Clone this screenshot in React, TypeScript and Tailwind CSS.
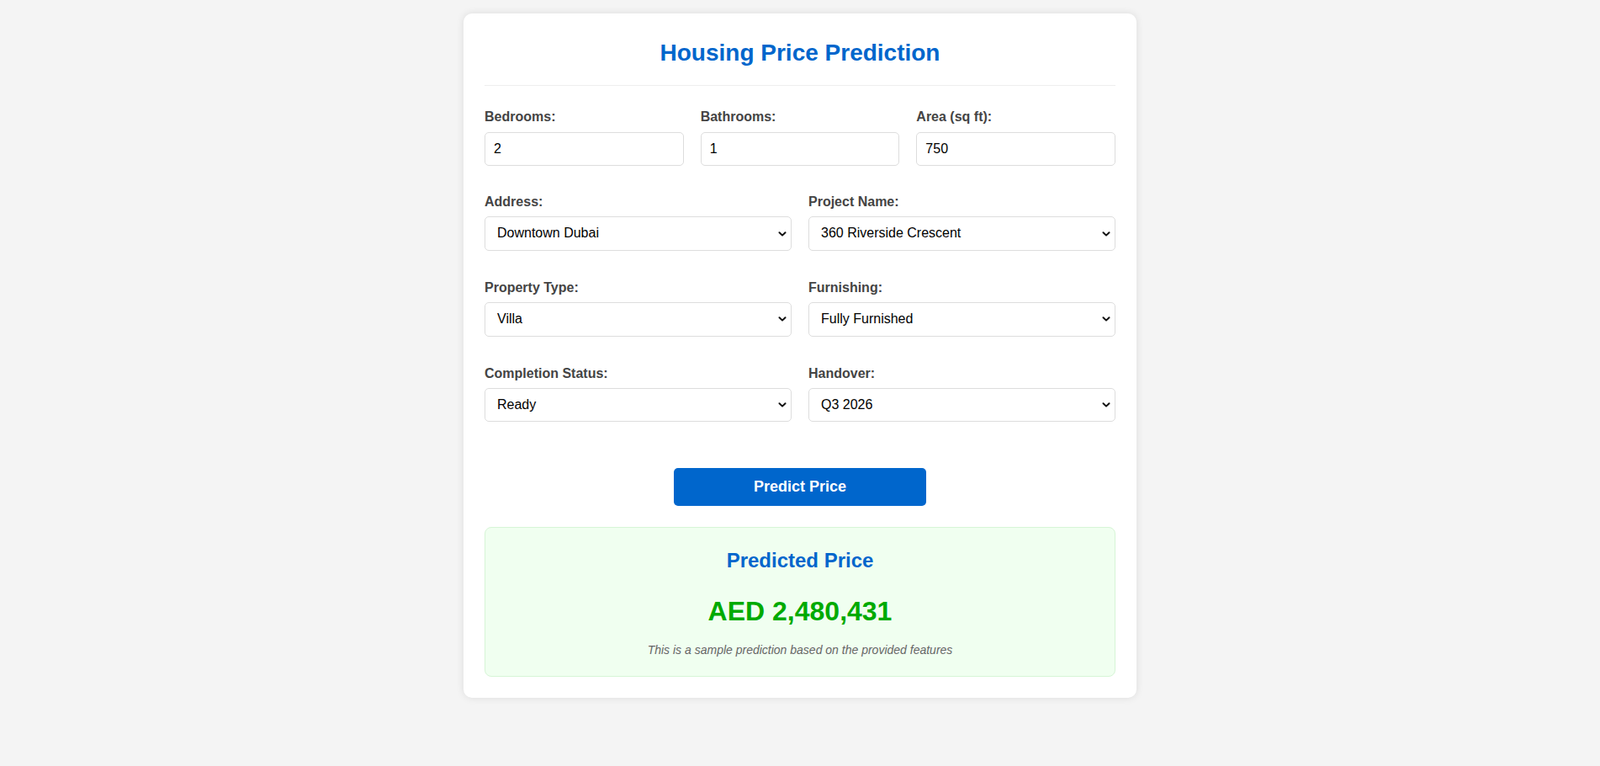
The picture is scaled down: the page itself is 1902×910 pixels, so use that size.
import React, { useState } from 'react';

const addresses = ['Downtown Dubai', 'Dubai Marina', 'Business Bay', 'Jumeirah Village Circle', 'Palm Jumeirah'];
const projects = ['360 Riverside Crescent', 'Burj Royale', 'Marina Gate', 'Sobha Hartland'];
const propertyTypes = ['Villa', 'Apartment', 'Townhouse', 'Penthouse'];
const furnishings = ['Fully Furnished', 'Semi Furnished', 'Unfurnished'];
const statuses = ['Ready', 'Off-Plan'];
const handovers = ['Q3 2026', 'Q4 2026', 'Q1 2027', 'Q2 2027'];

// ===== 公共组件 =====
function Label({ text }: { text: string }) {
  return <label className="block mb-2 text-[16px] leading-[1.15] font-bold text-[#444]">{text}</label>;
}

function NumberField({ label, value, onChange }: { label: string; value: string; onChange: (v: string) => void }) {
  return (
    <div>
      <Label text={label} />
      <input
        type="text"
        value={value}
        onChange={(e: React.ChangeEvent<HTMLInputElement>) => onChange(e.target.value)}
        className="block w-full px-[10px] py-[10px] text-[16px] leading-[1.15] text-black bg-white border border-[#ddd] rounded-[5px] focus:outline-none"
      />
    </div>
  );
}

function SelectField({ label, value, options, onChange }: { label: string; value: string; options: string[]; onChange: (v: string) => void }) {
  return (
    <div>
      <Label text={label} />
      <div className="relative">
        <select
          value={value}
          onChange={(e: React.ChangeEvent<HTMLSelectElement>) => onChange(e.target.value)}
          className="block w-full appearance-none pl-[14px] pr-8 py-[10px] text-[16px] leading-[1.15] text-black bg-white border border-[#ddd] rounded-[5px] focus:outline-none"
        >
          {options.map((o) => <option key={o}>{o}</option>)}
        </select>
        <svg className="absolute right-[6px] top-1/2 -translate-y-1/2 pointer-events-none" width="10" height="6" viewBox="0 0 10 6" fill="none" stroke="#111" strokeWidth="2" strokeLinecap="round" strokeLinejoin="round">
          <path d="M1.5 1.2L5 4.6l3.5-3.4" />
        </svg>
      </div>
    </div>
  );
}

// ===== 主页面 =====
export default function App() {
  const [bedrooms, setBedrooms] = useState('2');
  const [bathrooms, setBathrooms] = useState('1');
  const [area, setArea] = useState('750');
  const [address, setAddress] = useState(addresses[0]);
  const [project, setProject] = useState(projects[0]);
  const [propType, setPropType] = useState(propertyTypes[0]);
  const [furnishing, setFurnishing] = useState(furnishings[0]);
  const [status, setStatus] = useState(statuses[0]);
  const [handover, setHandover] = useState(handovers[0]);

  return (
    <div className="min-h-screen bg-[#f4f4f4] pt-4 font-['Liberation_Sans',Arial,sans-serif]">
      <div className="w-[800px] mx-auto bg-white rounded-[10px] shadow-[0_0_10px_rgba(0,0,0,0.1)] px-[25px] pt-[31px] pb-[25px]">
        <div className="pb-[22px] mb-[28px] border-b border-[#eee]">
          <h1 className="text-center text-[28px] leading-[1.15] font-bold text-[#0066cc]">Housing Price Prediction</h1>
        </div>

        <div className="grid grid-cols-3 gap-x-5 mb-[34px]">
          <NumberField label="Bedrooms:" value={bedrooms} onChange={setBedrooms} />
          <NumberField label="Bathrooms:" value={bathrooms} onChange={setBathrooms} />
          <NumberField label="Area (sq ft):" value={area} onChange={setArea} />
        </div>

        <div className="grid grid-cols-2 gap-x-5 mb-[35px]">
          <SelectField label="Address:" value={address} options={addresses} onChange={setAddress} />
          <SelectField label="Project Name:" value={project} options={projects} onChange={setProject} />
        </div>

        <div className="grid grid-cols-2 gap-x-5 mb-[35px]">
          <SelectField label="Property Type:" value={propType} options={propertyTypes} onChange={setPropType} />
          <SelectField label="Furnishing:" value={furnishing} options={furnishings} onChange={setFurnishing} />
        </div>

        <div className="grid grid-cols-2 gap-x-5">
          <SelectField label="Completion Status:" value={status} options={statuses} onChange={setStatus} />
          <SelectField label="Handover:" value={handover} options={handovers} onChange={setHandover} />
        </div>

        <div className="flex justify-center mt-[55px]">
          <button className="w-[300px] py-3 rounded-[5px] bg-[#0066cc] text-white text-[18px] leading-[1.15] font-bold">Predict Price</button>
        </div>

        <div className="mt-[25px] rounded-[8px] border border-[#d6f5d6] bg-[#f0fff0] pt-[25px] pb-[23px] text-center">
          <h3 className="text-[24px] leading-[1.15] font-bold text-[#0066cc]">Predicted Price</h3>
          <p className="mt-[28px] text-[32px] leading-[1.15] font-bold text-[#00aa00]">AED 2,480,431</p>
          <p className="mt-[20px] text-[14px] leading-[1.15] italic text-[#666]">This is a sample prediction based on the provided features</p>
        </div>
      </div>
    </div>
  );
}
